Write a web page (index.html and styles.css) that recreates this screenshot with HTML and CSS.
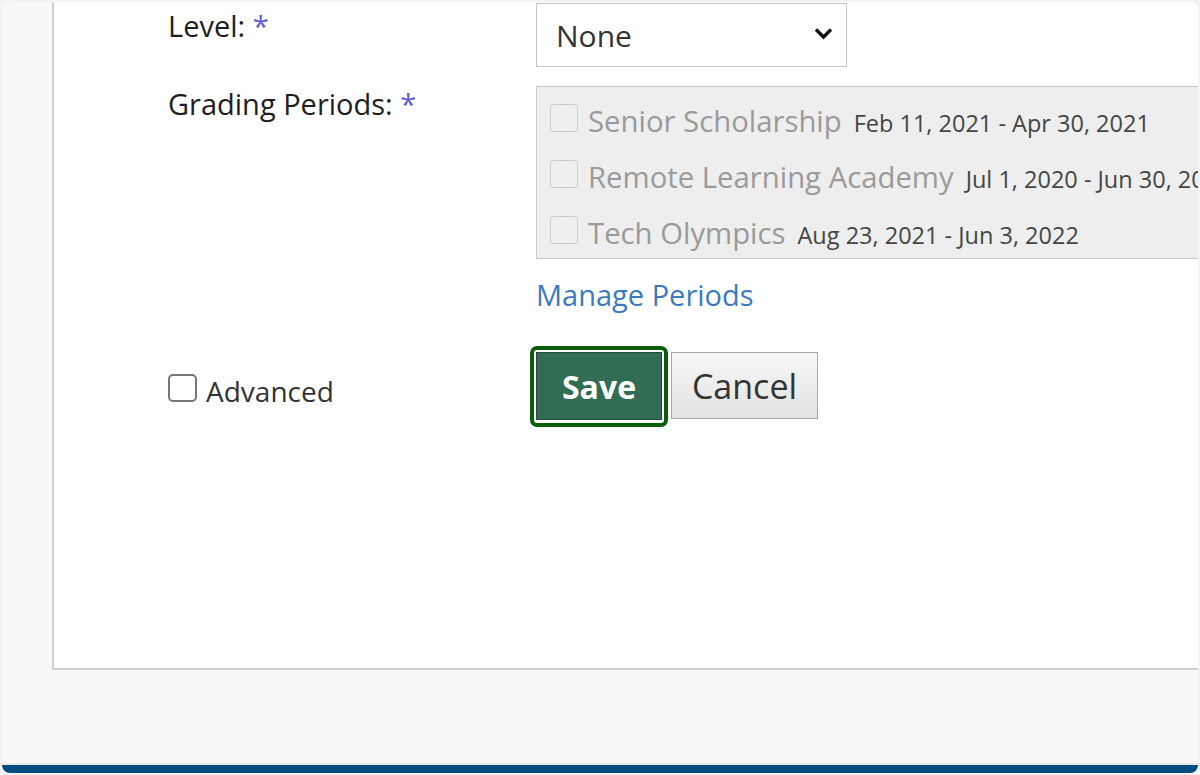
FILE: index.html
```html
<!DOCTYPE html>
<html>
<head>
<meta charset="utf-8">
<link rel="stylesheet" href="styles.css">
</head>
<body>
<div class="frame">
  <div class="panel">
    <div class="form">
      <div class="label">Level: <span class="req">*</span></div>
      <div class="field">
        <div class="select">
          <span>None</span>
          <svg class="chev" width="19" height="13" viewBox="0 0 19 13"><path d="M2 2.5 L9.5 10 L17 2.5" fill="none" stroke="#111" stroke-width="3.4"/></svg>
        </div>
      </div>

      <div class="label lbl-gp">Grading Periods: <span class="req">*</span></div>
      <div class="field">
        <div class="periods">
          <div class="period"><span class="cb"></span><span class="pname">Senior Scholarship</span><span class="pdate">Feb 11, 2021 - Apr 30, 2021</span></div>
          <div class="period"><span class="cb"></span><span class="pname">Remote Learning Academy</span><span class="pdate">Jul 1, 2020 - Jun 30, 2021</span></div>
          <div class="period"><span class="cb"></span><span class="pname">Tech Olympics</span><span class="pdate">Aug 23, 2021 - Jun 3, 2022</span></div>
        </div>
        <a class="manage">Manage Periods</a>
      </div>

      <div class="label adv"><span class="cb2"></span><span class="advtxt">Advanced</span></div>
      <div class="field buttons">
        <div class="focus"><button class="save">Save</button></div>
        <button class="cancel">Cancel</button>
      </div>
    </div>
  </div>
  <div class="spacer"></div>
  <div class="bar"></div>
</div>
</body>
</html>
```
FILE: styles.css
```css
html, body {
  margin: 0;
  padding: 0;
}
body {
  background: #f2f2f7;
  width: 1200px;
  height: 775px;
  overflow: hidden;
  font-family: "Open Sans", "Noto Sans", sans-serif;
}
.frame {
  margin: 2px 2px 0 2px;
  height: 771px;
  background: #f9f8f6;
  border-radius: 8px;
  overflow: hidden;
  display: flex;
  flex-direction: column;
}
.panel {
  margin-left: 50px;
  height: 666px;
  flex: none;
  background: #fff;
  border-left: 2px solid #cfcfcd;
  border-bottom: 2px solid #cfcfcd;
  overflow: hidden;
}
.form {
  display: grid;
  grid-template-columns: 368px 1fr;
  padding-left: 114px;
  padding-top: 1px;
}
.label {
  font-size: 29px;
  line-height: 40px;
  color: #1e1e1e;
  padding-top: 3px;
  align-self: start;
}
.req {
  color: #5b5bdc;
}
.lbl-gp {
  padding-top: 17px;
}
.field {
  display: flex;
  flex-direction: column;
  align-items: flex-start;
}
.select {
  display: flex;
  align-items: center;
  justify-content: space-between;
  padding: 0 13px 0 19px;
  box-sizing: border-box;
  width: 311px;
  height: 64px;
  border: 1px solid #c6c6c6;
  font-size: 30px;
  color: #333;
  background: #fff;
}
.chev {
  margin-top: -3px;
}
.periods {
  margin-top: 19px;
  width: 700px;
  height: 173px;
  box-sizing: border-box;
  border: 1px solid #c8c8c8;
  background: #eeeeee;
  padding: 14px 0 0 13px;
  display: flex;
  flex-direction: column;
  gap: 16px;
}
.period {
  display: flex;
  align-items: baseline;
  height: 40px;
  line-height: 40px;
  white-space: nowrap;
}
.cb {
  width: 28px;
  height: 28px;
  box-sizing: border-box;
  border: 1px solid #c9c9c9;
  border-radius: 4px;
  background: #efefef;
  margin-right: 10px;
}
.pname {
  font-size: 29.3px;
  color: #9a9a9a;
  margin-right: 12px;
}
.pdate {
  font-size: 23.5px;
  color: #454545;
}
.manage {
  margin-top: 16px;
  font-size: 29px;
  color: #3a7bc0;
  line-height: 40px;
}
.adv {
  display: flex;
  align-items: center;
  padding-top: 55px;
  font-size: 28px;
  line-height: 38px;
  color: #333;
}
.advtxt {
  position: relative;
  top: 2px;
}
.cb2 {
  width: 29px;
  height: 28px;
  box-sizing: border-box;
  border: 2px solid #767676;
  border-radius: 5px;
  margin-right: 9px;
  margin-top: -2px;
}
.buttons {
  flex-direction: row;
  align-items: flex-start;
  margin-top: 31px;
  margin-left: -6px;
}
.focus {
  border: 4px solid #0b5c0b;
  border-radius: 7px;
  padding: 2px 2px 3px 2px;
}
.save {
  width: 126px;
  height: 68px;
  background: #316d54;
  border: 1px solid #1e4a36;
  color: #fff;
  font-family: "Open Sans", sans-serif;
  font-weight: 700;
  font-size: 32px;
  padding: 0;
  display: block;
}
.cancel {
  margin-left: 3px;
  margin-top: 6px;
  width: 147px;
  height: 67px;
  background: linear-gradient(#f7f7f7, #e2e2e2);
  border: 1px solid #a9a9a9;
  color: #333;
  font-family: "Open Sans", sans-serif;
  font-size: 34px;
  padding: 0;
}
.spacer {
  flex: 1;
}
.bar {
  height: 8px;
  border-top: 2px solid #e8eaee;
  background: #004b80;
}
```
